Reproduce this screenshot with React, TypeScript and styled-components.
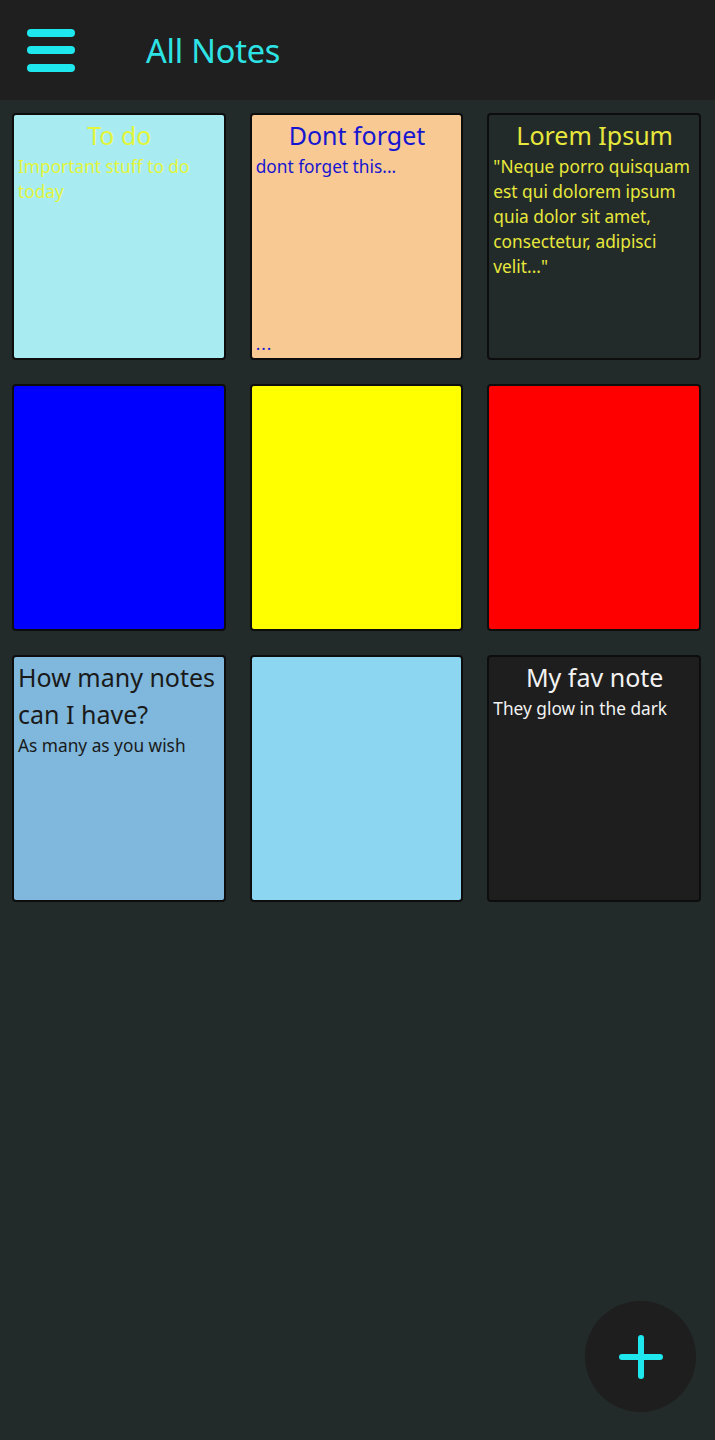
import React from "react";
import styled, { createGlobalStyle } from "styled-components";

const Global = createGlobalStyle`
  html, body { margin: 0; padding: 0; background: #232a2a; }
  body { font-family: "Noto Sans", "Open Sans", sans-serif; }
  * { box-sizing: border-box; }
`;

const Page = styled.div`
  min-height: 1440px;
  background: #232a2a;
  position: relative;
`;

const Header = styled.header`
  height: 100px;
  background: #1f1f1f;
  display: flex;
  align-items: center;
  padding-left: 27px;
  gap: 71px;
`;

const Menu = styled.button`
  width: 48px;
  height: 43px;
  padding: 0;
  border: none;
  background: transparent;
  display: flex;
  flex-direction: column;
  justify-content: space-between;
`;

const Bar = styled.span`
  display: block;
  height: 8px;
  width: 100%;
  border-radius: 4px;
  background: #1ee8ee;
`;

const Title = styled.h1`
  margin: 0;
  font-size: 32.5px;
  font-weight: 400;
  color: #2ee3e6;
  letter-spacing: -0.2px;
`;

const Grid = styled.main`
  display: grid;
  grid-template-columns: repeat(3, 1fr);
  column-gap: 24px;
  row-gap: 24px;
  padding: 13px 14px 0 12px;
`;

const Card = styled.div<{ $bg: string; $fg: string }>`
  height: 247px;
  background: ${(p) => p.$bg};
  color: ${(p) => p.$fg};
  border: 2px solid #0d0d0d;
  border-radius: 4px;
  padding: 2px 3px 5px 4px;
  display: flex;
  flex-direction: column;
  overflow: hidden;
`;

const NoteTitle = styled.div<{ $align: string }>`
  font-size: 25px;
  line-height: 37px;
  text-align: ${(p) => p.$align};
`;

const NoteBody = styled.div`
  font-size: 17.3px;
  line-height: 25px;
`;

const More = styled.div`
  margin-top: auto;
  font-size: 17px;
  line-height: 18px;
  letter-spacing: 1px;
`;

const Fab = styled.button`
  position: absolute;
  left: 585px;
  top: 1301px;
  width: 111px;
  height: 111px;
  border-radius: 50%;
  border: none;
  background: #1e1e1e;
  display: flex;
  align-items: center;
  justify-content: center;
  padding: 0;
`;

type Note = {
  title?: string;
  body?: string;
  bg: string;
  fg: string;
  align?: string;
  more?: boolean;
};

const notes: Note[] = [
  { title: "To do", body: "Important stuff to do today", bg: "#a8ecf2", fg: "#e3f53c" },
  { title: "Dont forget", body: "dont forget this...", bg: "#f9c993", fg: "#1616d0", more: true },
  {
    title: "Lorem Ipsum",
    body: "\"Neque porro quisquam est qui dolorem ipsum quia dolor sit amet, consectetur, adipisci velit...\"",
    bg: "#232a2a",
    fg: "#e8e83c",
  },
  { bg: "#0000ff", fg: "#000" },
  { bg: "#ffff00", fg: "#000" },
  { bg: "#ff0000", fg: "#000" },
  { title: "How many notes can I have?", body: "As many as you wish", bg: "#7fb8dc", fg: "#1a1a1a", align: "left" },
  { bg: "#8dd6f1", fg: "#000" },
  { title: "My fav note", body: "They glow in the dark", bg: "#1e1e1e", fg: "#f2f2f2" },
];

export default function App() {
  return (
    <Page>
      <Global />
      <Header>
        <Menu aria-label="menu">
          <Bar />
          <Bar />
          <Bar />
        </Menu>
        <Title>All Notes</Title>
      </Header>
      <Grid>
        {notes.map((n, i) => (
          <Card key={i} $bg={n.bg} $fg={n.fg}>
            {n.title && <NoteTitle $align={n.align ?? "center"}>{n.title}</NoteTitle>}
            {n.body && <NoteBody>{n.body}</NoteBody>}
            {n.more && <More>...</More>}
          </Card>
        ))}
      </Grid>
      <Fab aria-label="add note">
        <svg width="46" height="46" viewBox="0 0 46 46">
          <path d="M23 4 V42 M4 23 H42" stroke="#1ee8ee" strokeWidth="6" strokeLinecap="round" />
        </svg>
      </Fab>
    </Page>
  );
}
